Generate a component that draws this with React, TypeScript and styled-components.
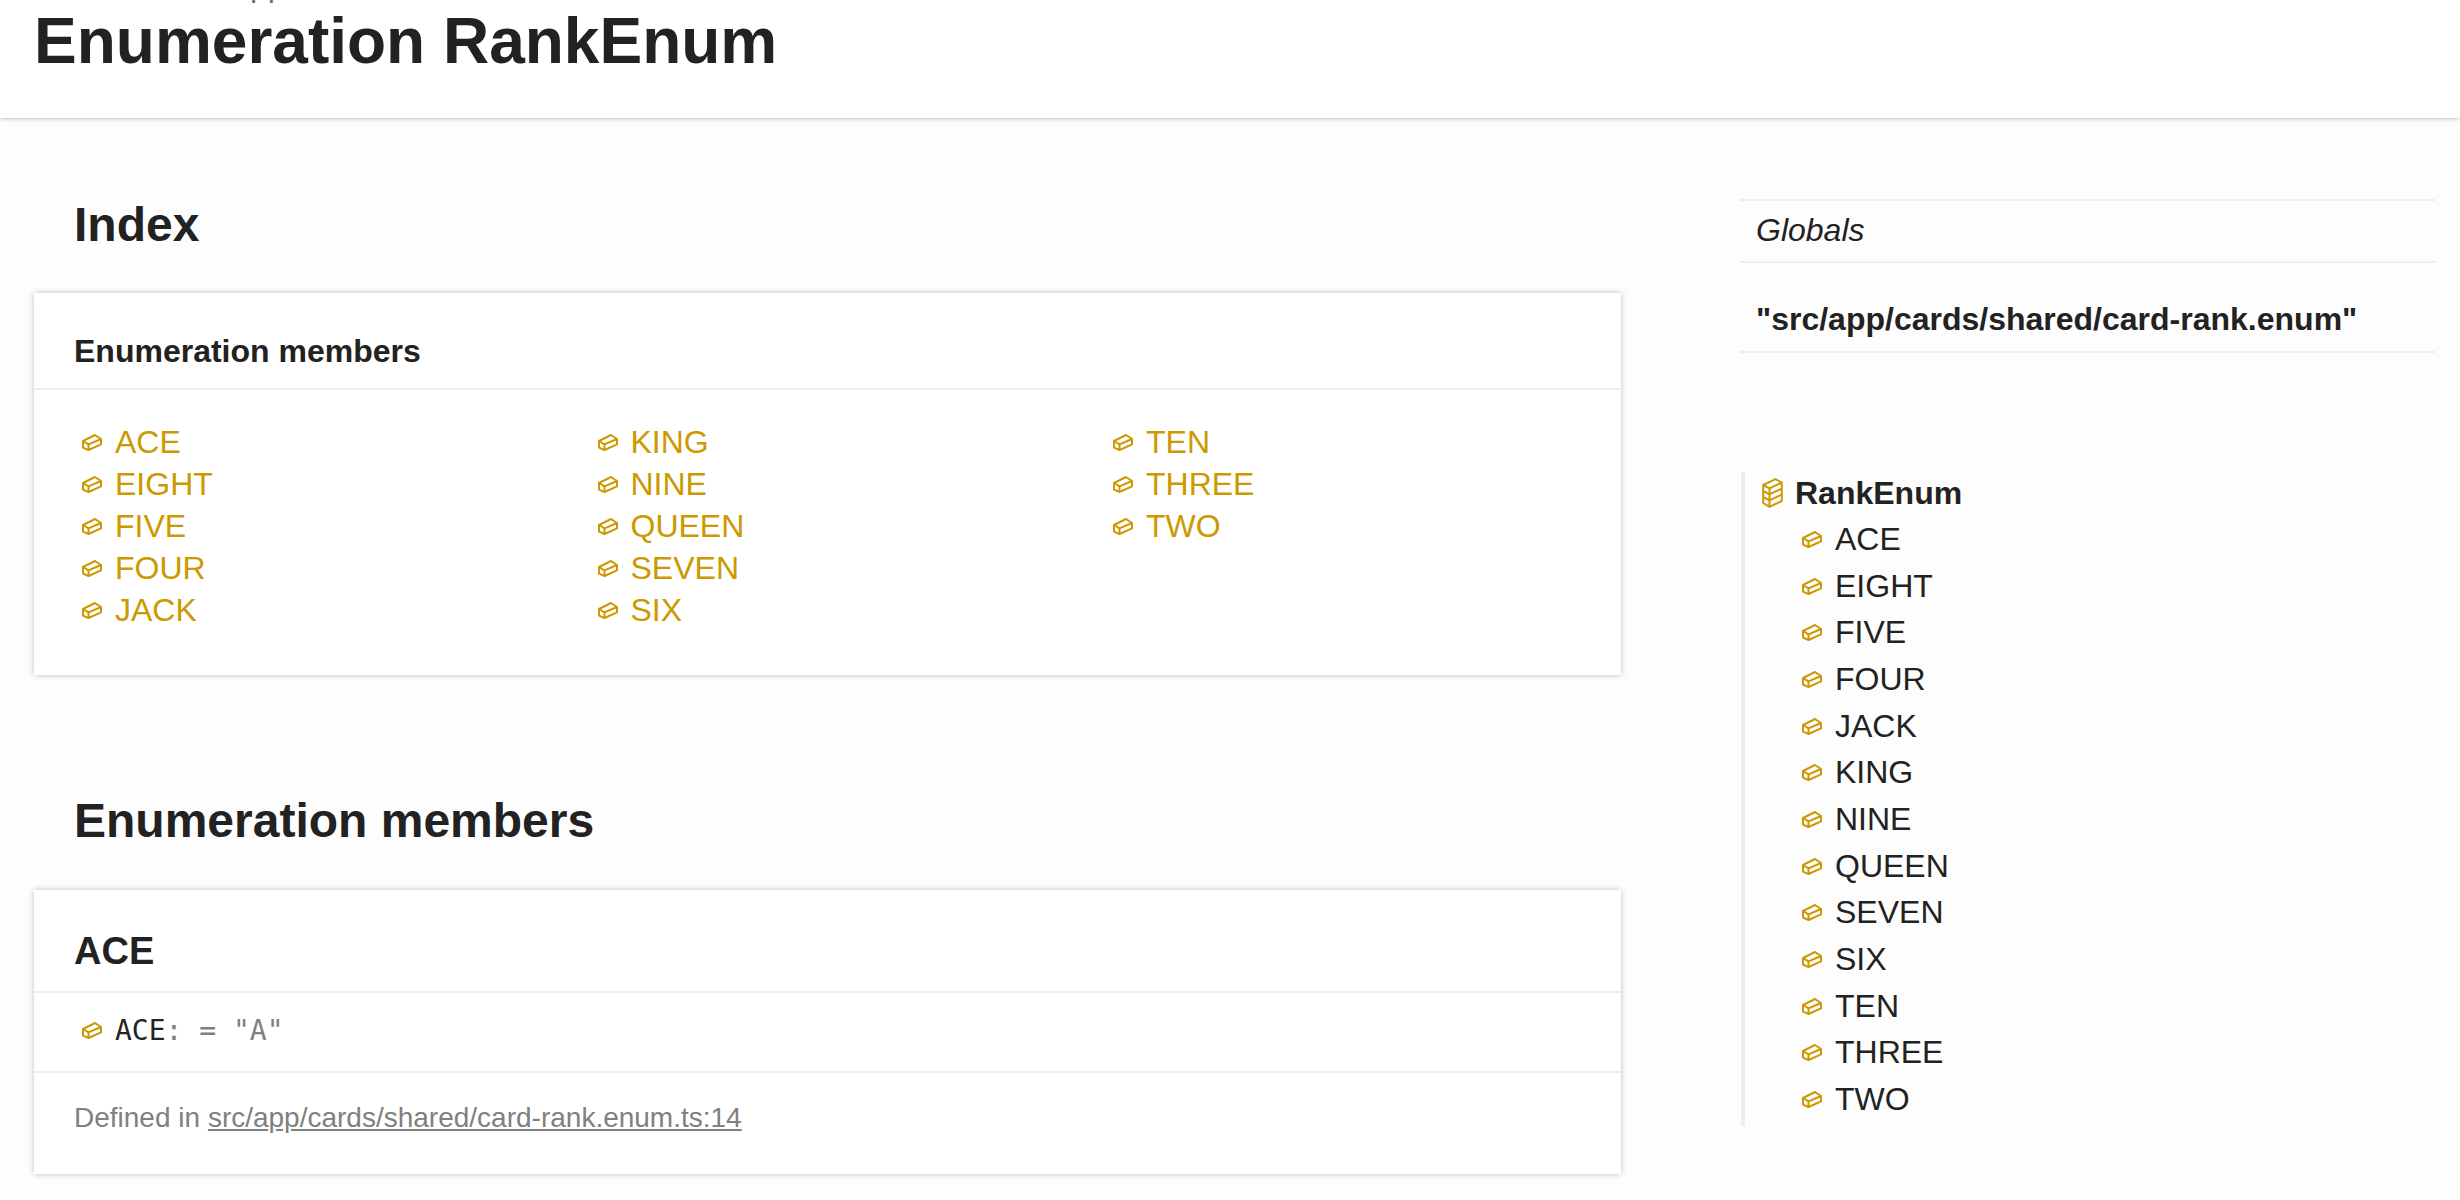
import styled, { createGlobalStyle } from "styled-components"

const GlobalStyle = createGlobalStyle`
  html, body {
    margin: 0;
    padding: 0;
    height: 100%;
    overflow: hidden;
    background: #fdfdfd;
    color: #222;
    font-family: "Liberation Sans", Arial, sans-serif;
  }
`

const Page = styled.div`
  height: 1200px;
  overflow: hidden;
`

const Header = styled.header`
  height: 118px;
  background: #fff;
  padding: 0 34px;
  box-shadow: 0 0 5px rgba(0, 0, 0, 0.35);
  overflow: hidden;
  position: relative;
`

const Breadcrumb = styled.div`
  height: 1px;
  font-size: 32px;
  line-height: 32px;
  color: #707070;
  white-space: pre;
  display: flex;
  align-items: flex-end;
`

const Title = styled.h1`
  margin: 8px 0 0;
  font-size: 64px;
  line-height: 64px;
  font-weight: 700;
  color: #222;
`

const Body = styled.div`
  display: grid;
  grid-template-columns: 1587px 695px;
  column-gap: 119px;
  padding: 0 25px 0 34px;
`

const Section = styled.section`
  display: flex;
  flex-direction: column;
`

const SectionTitle = styled.h2<{ $top: number }>`
  margin: ${(p) => p.$top}px 0 0 40px;
  font-size: 48px;
  line-height: 52px;
  font-weight: 700;
`

const Card = styled.div<{ $height: number; $top: number }>`
  height: ${(p) => p.$height}px;
  margin-top: ${(p) => p.$top}px;
  background: #fff;
  box-shadow: 0 0 6px rgba(0, 0, 0, 0.25);
  display: flex;
  flex-direction: column;
`

const CardHead = styled.h3`
  margin: 0;
  height: 97px;
  box-sizing: border-box;
  padding: 40px 40px 0;
  font-size: 32px;
  line-height: 36px;
  font-weight: 700;
  border-bottom: 2px solid #eee;
`

const MemberGrid = styled.ul`
  list-style: none;
  margin: 0;
  padding: 31px 0 0 40px;
  display: grid;
  grid-template-rows: repeat(5, 42px);
  grid-template-columns: repeat(3, 515.5px);
  grid-auto-flow: column;
`

const MemberLink = styled.li`
  display: flex;
  align-items: center;
  font-size: 32px;
  color: #cc9900;
`

const Brick = styled.svg`
  width: 20px;
  height: 17px;
  margin: 0 13px 0 8px;
  flex: none;
`

const MemberTitle = styled.h3`
  margin: 0;
  height: 103px;
  box-sizing: border-box;
  padding: 39px 40px 0;
  font-size: 38px;
  line-height: 44px;
  font-weight: 700;
  border-bottom: 2px solid #eee;
`

const Signature = styled.div`
  height: 80px;
  box-sizing: border-box;
  padding: 0 40px 4px;
  display: flex;
  align-items: center;
  font-family: "DejaVu Sans Mono", monospace;
  font-size: 28px;
  white-space: pre;
  color: #808080;
  border-bottom: 2px solid #eee;
`

const SigName = styled.span`
  color: #222;
`

const Defined = styled.p`
  margin: 27px 40px 0;
  font-size: 28px;
  line-height: 36px;
  color: #808080;
  a {
    color: inherit;
    text-decoration: underline;
  }
`

const Aside = styled.aside`
  display: flex;
  flex-direction: column;
  padding-top: 81px;
`

const CrumbRow = styled.div`
  height: 62px;
  box-sizing: border-box;
  padding: 0 0 2px 16px;
  border-top: 2px solid #eee;
  display: flex;
  align-items: center;
  font-size: 32px;
  font-style: italic;
`

const ModuleRow = styled.div`
  height: 92px;
  box-sizing: border-box;
  padding: 38px 0 0 16px;
  border-top: 2px solid #eee;
  border-bottom: 2px solid #eee;
  font-size: 32px;
  line-height: 36px;
  font-weight: 700;
`

const Tree = styled.nav`
  margin: 119px 0 0 1px;
  border-left: 4px solid #eee;
  padding: 0 0 0 17px;
  height: 654px;
  box-sizing: border-box;
`

const TreeHead = styled.div`
  display: flex;
  align-items: center;
  height: 42px;
  margin-bottom: 2px;
  font-size: 32px;
  font-weight: 700;
`

const Stack = styled.svg`
  width: 21px;
  height: 30px;
  margin-right: 12px;
`

const TreeItem = styled.div`
  display: flex;
  align-items: center;
  height: 46.7px;
  padding-left: 32px;
  font-size: 32px;
  color: #222;
`

const members = ["ACE", "EIGHT", "FIVE", "FOUR", "JACK", "KING", "NINE", "QUEEN", "SEVEN", "SIX", "TEN", "THREE", "TWO"]

const BrickIcon = () => (
  <Brick viewBox="0 0 20 17" fill="none" stroke="#cc9900" strokeWidth="2" strokeLinejoin="round">
    <path d="M1 7 L13 1 L19 5 L19 10.4 L6.5 16 L1 13.6 Z" />
    <path d="M1 7 L6.5 10.4 L19 5 M6.5 10.4 L6.5 16" />
  </Brick>
)

const StackIcon = () => (
  <Stack viewBox="0 0 21 30" fill="none" stroke="#cc9900" strokeWidth="2" strokeLinejoin="round">
    <path d="M1.2 7 L13.5 1.2 L19.8 4.6 L19.8 23 L7.5 28.8 L1.2 25 Z" />
    <path d="M1.2 7 L7.5 10.4 L19.8 4.6 M7.5 10.4 L7.5 28.8 M1.2 13 L7.5 16.4 L19.8 10.6 M1.2 19 L7.5 22.4 L19.8 16.6" />
  </Stack>
)

export default function App() {
  return (
    <Page>
      <GlobalStyle />
      <Header>
        <Breadcrumb>{`Globals / "src/app/cards/shared/card-rank.enum" / RankEnum`}</Breadcrumb>
        <Title>Enumeration RankEnum</Title>
      </Header>
      <Body>
        <Section>
          <SectionTitle $top={81}>Index</SectionTitle>
          <Card $height={382} $top={42}>
            <CardHead>Enumeration members</CardHead>
            <MemberGrid>
              {members.map((m) => (
                <MemberLink key={m}>
                  <BrickIcon />
                  {m}
                </MemberLink>
              ))}
            </MemberGrid>
          </Card>
          <SectionTitle $top={120}>Enumeration members</SectionTitle>
          <Card $height={284} $top={43}>
            <MemberTitle>ACE</MemberTitle>
            <Signature>
              <BrickIcon />
              <SigName>ACE</SigName>
              {`: = "A"`}
            </Signature>
            <Defined>
              Defined in <a href="#">src/app/cards/shared/card-rank.enum.ts:14</a>
            </Defined>
          </Card>
        </Section>
        <Aside>
          <CrumbRow>Globals</CrumbRow>
          <ModuleRow>"src/app/cards/shared/card-rank.enum"</ModuleRow>
          <Tree>
            <TreeHead>
              <StackIcon />
              RankEnum
            </TreeHead>
            {members.map((m) => (
              <TreeItem key={m}>
                <BrickIcon />
                {m}
              </TreeItem>
            ))}
          </Tree>
        </Aside>
      </Body>
    </Page>
  )
}
